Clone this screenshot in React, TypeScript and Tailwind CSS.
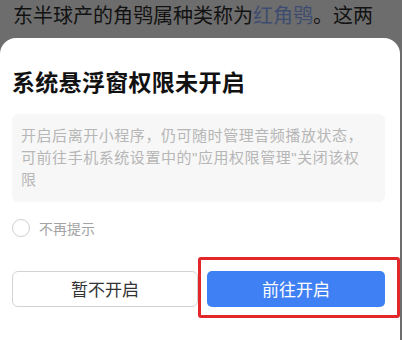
import React, { useState } from 'react';

const cjk = { fontFamily: '"Noto Sans CJK SC", "Noto Sans", sans-serif' };
const latin = { fontFamily: '"Liberation Sans", sans-serif' };

const App: React.FC = () => {
  const [noRemind, setNoRemind] = useState(false);

  return (
    <div className="w-[402px] h-[340px] overflow-hidden bg-[#6d6d6d]" style={cjk}>
      <p className="pl-[13px] pt-[1px] text-[20px] leading-[28px] text-[#121212] whitespace-nowrap">
        东半球产的角鸮属种类称为<span className="text-[#3d4c70]">红角鸮</span>。这两
      </p>

      <div className="mt-[9px] w-[400px] h-[400px] bg-white rounded-t-[16px] pt-[27px] pl-[12px] pr-[15px]">
        <h2 className="text-[23px] leading-[32px] font-bold text-[#111] tracking-[0.3px]">系统悬浮窗权限未开启</h2>

        <div className="mt-[17px] bg-[#f7f7f7] rounded-[6px] px-[9px] pt-[10px] pb-[12px]">
          <p className="text-[15px] leading-[21.5px] text-[#b6b6b6] tracking-[0.55px] whitespace-nowrap">
            开启后离开小程序，仍可随时管理音频播放状态，
            <br />
            可前往手机系统设置中的<span style={latin}>"</span>应用权限管理<span style={latin}>"</span>关闭该权
            <br />
            限
          </p>
        </div>

        <button
          onClick={() => setNoRemind(!noRemind)}
          className="mt-[16px] flex items-center gap-[9px]"
        >
          <span
            className={`w-[18px] h-[18px] rounded-full border ${noRemind ? 'border-[#4080f5] bg-[#4080f5]' : 'border-[#cfcfcf]'}`}
          ></span>
          <span className="text-[14px] leading-[20px] text-[#a3a3a3]">不再提示</span>
        </button>

        <div className="mt-[33px] flex gap-[9px]">
          <button className="w-[186px] h-[36px] rounded-[6px] border border-[#d3d3d3] text-[17px] text-[#333]">
            暂不开启
          </button>
          <div className="relative flex-1">
            <button className="w-full h-[36px] rounded-[5px] bg-[#4080f5] text-[17px] text-white">
              前往开启
            </button>
            <div className="absolute left-[-9px] right-[-15px] top-[-14px] bottom-[-11px] border-[3px] border-[#e3262a] rounded-[3px] pointer-events-none"></div>
          </div>
        </div>
      </div>
    </div>
  );
};

export default App;
